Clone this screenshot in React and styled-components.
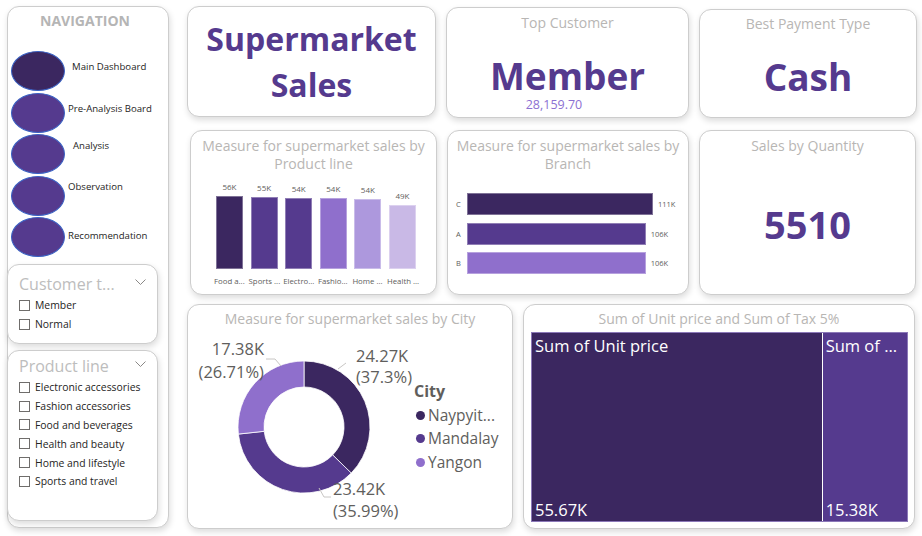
import React from 'react';
import styled, { createGlobalStyle } from 'styled-components';

const Global = createGlobalStyle`
  html, body { margin: 0; padding: 0; background: #fff; }
  body { font-family: "Open Sans", "Noto Sans", sans-serif; }
  * { box-sizing: border-box; }
`;

const C = {
  dark: '#3b2760',
  mid: '#553a8e',
  violet: '#8f6fcc',
  lilac: '#ad98dd',
  pale: '#c9b9e6',
  gray: '#b8b6b4',
  text: '#605e5c',
};

const Page = styled.div`
  width: 922px;
  height: 536px;
  overflow: hidden;
  display: flex;
  gap: 18px;
  padding: 6px 0 0 7px;
`;

const Card = styled.div`
  background: #fff;
  border: 1px solid #cdcdcd;
  border-radius: 12px;
  box-shadow: 1px 3px 6px rgba(0, 0, 0, 0.14);
  width: ${(p) => p.$w}px;
  height: ${(p) => p.$h}px;
  margin-top: ${(p) => p.$mt || 0}px;
  flex-shrink: 0;
  overflow: hidden;
`;

/* ---------- Navigation ---------- */
const NavCard = styled(Card)`
  display: flex;
  flex-direction: column;
  overflow: visible;
`;

const NavTitle = styled.div`
  text-align: center;
  font-weight: 700;
  font-size: 14px;
  line-height: 18px;
  color: #b5b5b5;
  padding-top: 5px;
  padding-right: 6px;
`;

const NavList = styled.div`
  display: flex;
  flex-direction: column;
  gap: 1.5px;
  padding: 21px 0 0 3px;
`;

const NavItem = styled.div`
  display: flex;
  align-items: center;
`;

const Ellipse = styled.div`
  width: 54px;
  height: 40px;
  border-radius: 50%;
  background: ${(p) => (p.$active ? C.dark : C.mid)};
  border: 1px solid #3a62c4;
  flex-shrink: 0;
`;

const NavLabel = styled.span`
  font-size: 9.6px;
  color: #252423;
  margin-left: ${(p) => p.$dx}px;
  margin-bottom: ${(p) => p.$up * 2}px;
  white-space: nowrap;
`;

const Slicers = styled.div`
  display: flex;
  flex-direction: column;
  gap: 6px;
  margin: 7px 0 0 -1px;
`;

const SlicerCard = styled(Card)`
  display: flex;
  flex-direction: column;
  padding: ${(p) => p.$pt}px 11px 0 11px;
`;

const SlicerHead = styled.div`
  display: flex;
  align-items: center;
  justify-content: space-between;
  margin-bottom: 1px;
`;

const SlicerTitle = styled.span`
  font-size: 16px;
  line-height: 22px;
  color: #bdbdbd;
`;

const Chevron = styled.svg`
  width: 11px;
  height: 7px;
  margin-top: -3px;
`;

const CheckRow = styled.label`
  display: flex;
  align-items: center;
  gap: 5px;
  height: 18.8px;
  font-size: 10.4px;
  color: #252423;
  white-space: nowrap;
`;

const Box = styled.span`
  width: 11px;
  height: 11px;
  border: 1px solid #6f6d6b;
  flex-shrink: 0;
`;

/* ---------- Main ---------- */
const Main = styled.div`
  display: flex;
  flex-direction: column;
`;

const Row = styled.div`
  display: flex;
  align-items: flex-start;
  gap: ${(p) => p.$gap}px;
  margin-top: ${(p) => p.$mt || 0}px;
  padding-left: ${(p) => p.$pl || 0}px;
`;

const TitleCard = styled(Card)`
  display: flex;
  align-items: center;
  justify-content: center;
  text-align: center;
`;

const BigTitle = styled.h1`
  margin: 0;
  font-size: 32px;
  line-height: 46px;
  font-weight: 700;
  color: ${C.mid};
`;

const KpiCard = styled(Card)`
  display: flex;
  flex-direction: column;
  align-items: center;
  padding-top: ${(p) => p.$pt}px;
`;

const KpiLabel = styled.div`
  font-size: 14px;
  line-height: 20px;
  color: ${C.gray};
`;

const KpiValue = styled.div`
  font-size: ${(p) => p.$size || 37}px;
  line-height: 34px;
  font-weight: 700;
  color: ${C.mid};
  margin-top: ${(p) => p.$mt}px;
`;

const KpiSub = styled.div`
  font-size: 12.5px;
  line-height: 15px;
  color: #8c70d2;
  margin-top: 4px;
  padding-right: 27px;
`;

const ChartCard = styled(Card)`
  display: flex;
  flex-direction: column;
  padding-top: ${(p) => p.$pt ?? 6}px;
`;

const ChartTitle = styled.div`
  text-align: center;
  font-size: 14px;
  line-height: ${(p) => p.$lh || 18}px;
  color: ${C.gray};
  padding: 0 4px;
`;

/* column chart */
const ColumnArea = styled.div`
  display: flex;
  align-items: flex-end;
  gap: 7.6px;
  height: 96px;
  padding-left: 25px;
`;

const Col = styled.div`
  width: 27px;
  display: flex;
  flex-direction: column;
  align-items: center;
`;

const ValLabel = styled.span`
  font-size: 8px;
  line-height: 10px;
  color: ${C.text};
  margin-bottom: 4px;
`;

const ColBar = styled.div`
  width: 27px;
  background: ${(p) => p.$c};
  border: 1px solid rgba(255, 255, 255, 0.35);
`;

const CatRow = styled.div`
  display: flex;
  gap: 4.6px;
  padding-left: 23px;
  margin-top: 7px;
`;

const CatLabel = styled.span`
  width: 30px;
  font-size: 7.8px;
  line-height: 10px;
  color: ${C.text};
  white-space: nowrap;
  text-align: center;
`;

/* bar chart */
const BarList = styled.div`
  display: flex;
  flex-direction: column;
  gap: 7.5px;
  margin-top: 20px;
  padding-left: 8px;
`;

const BarRow = styled.div`
  display: flex;
  align-items: center;
  height: 22px;
`;

const BarKey = styled.span`
  width: 11px;
  font-size: 7.5px;
  color: ${C.text};
`;

const HBar = styled.div`
  height: 22px;
  background: ${(p) => p.$c};
  border: 1px solid rgba(255, 255, 255, 0.35);
`;

const BarVal = styled.span`
  font-size: 7.5px;
  color: ${C.text};
  margin-left: 5px;
`;

const QtyBody = styled.div`
  flex: 1;
  display: flex;
  align-items: center;
  justify-content: center;
  padding-bottom: 3px;
`;

/* donut */
const DonutBody = styled.div`
  display: flex;
  align-items: flex-start;
  gap: 2px;
`;

const Legend = styled.div`
  display: flex;
  flex-direction: column;
  padding-top: 51px;
`;

const LegendTitle = styled.div`
  font-size: 16px;
  line-height: 23.5px;
  font-weight: 700;
  color: ${C.text};
`;

const LegendItem = styled.div`
  display: flex;
  align-items: center;
  gap: 3px;
  font-size: 15.5px;
  line-height: 23.5px;
  color: ${C.text};
  white-space: nowrap;
  margin-left: 2px;
`;

const Dot = styled.span`
  width: 9px;
  height: 9px;
  border-radius: 50%;
  background: ${(p) => p.$c};
`;

/* treemap */
const TreeArea = styled.div`
  margin: 3px 6px 6px 7px;
  flex: 1;
  display: flex;
  gap: 1px;
  background: #fff;
  border: 1px solid #8b78b8;
`;

const Tile = styled.div`
  flex: ${(p) => p.$v} 1 0;
  min-width: 0;
  background: ${(p) => p.$c};
  display: flex;
  flex-direction: column;
  justify-content: space-between;
  padding: 2px 3px 0 3px;
  color: #fff;
  font-size: 16.5px;
  line-height: 22px;
  white-space: nowrap;
  overflow: hidden;
`;

const products = [
  { k: 'Food a...', v: 56.14, c: C.dark, l: '56K' },
  { k: 'Sports ...', v: 55.12, c: C.mid, l: '55K' },
  { k: 'Electro...', v: 54.34, c: C.mid, l: '54K' },
  { k: 'Fashio...', v: 54.31, c: C.violet, l: '54K' },
  { k: 'Home ...', v: 53.86, c: C.lilac, l: '54K' },
  { k: 'Health ...', v: 49.19, c: C.pale, l: '49K' },
];

const branches = [
  { k: 'C', v: 110.57, c: C.dark, l: '111K' },
  { k: 'A', v: 106.2, c: C.mid, l: '106K' },
  { k: 'B', v: 106.2, c: C.violet, l: '106K' },
];

const navItems = [
  { t: 'Main Dashboard', dx: 7, up: 5, active: true },
  { t: 'Pre-Analysis Board', dx: 3, up: 4.5 },
  { t: 'Analysis', dx: 8, up: 9 },
  { t: 'Observation', dx: 3, up: 9.5 },
  { t: 'Recommendation', dx: 3, up: 2 },
];

function arcPath(cx, cy, R, r, a0, a1) {
  const rad = (a) => (a * Math.PI) / 180;
  const p = (a, d) => [cx + d * Math.sin(rad(a)), cy - d * Math.cos(rad(a))];
  const large = a1 - a0 > 180 ? 1 : 0;
  const [x0, y0] = p(a0, R);
  const [x1, y1] = p(a1, R);
  const [x2, y2] = p(a1, r);
  const [x3, y3] = p(a0, r);
  return `M${x0} ${y0} A${R} ${R} 0 ${large} 1 ${x1} ${y1} L${x2} ${y2} A${r} ${r} 0 ${large} 0 ${x3} ${y3} Z`;
}

function Donut() {
  const cx = 116, cy = 98, R = 66, r = 40;
  const segs = [
    { a0: 0, a1: 134.28, c: C.dark },
    { a0: 134.28, a1: 263.84, c: C.mid },
    { a0: 263.84, a1: 360, c: C.violet },
  ];
  const t = { fontSize: 16.5, fill: C.text, fontFamily: '"Open Sans", sans-serif' };
  return (
    <svg width="224" height="196" viewBox="0 0 224 196">
      {segs.map((s, i) => (
        <path key={i} d={arcPath(cx, cy, R, r, s.a0, s.a1)} fill={s.c} stroke="#fff" strokeWidth="0.8" />
      ))}
      <g stroke="#c8c6c4" strokeWidth="1" fill="none">
        <polyline points="150,40 158,34" />
        <polyline points="78,30 87,30 93,37" />
        <polyline points="131,159 136,168 143,168" />
      </g>
      <text x="168" y="33" {...t}>24.27K</text>
      <text x="168" y="54" {...t}>(37.3%)</text>
      <text x="76" y="26" textAnchor="end" {...t}>17.38K</text>
      <text x="76" y="49" textAnchor="end" {...t}>(26.71%)</text>
      <text x="145" y="166" {...t}>23.42K</text>
      <text x="145" y="188" {...t}>(35.99%)</text>
    </svg>
  );
}

function Slicer({ title, items, h, pt }) {
  return (
    <SlicerCard $w={151} $h={h} $pt={pt}>
      <SlicerHead>
        <SlicerTitle>{title}</SlicerTitle>
        <Chevron viewBox="0 0 11 7">
          <polyline points="0.5,0.5 5.5,5.5 10.5,0.5" fill="none" stroke="#8a8886" strokeWidth="1" />
        </Chevron>
      </SlicerHead>
      {items.map((it) => (
        <CheckRow key={it}>
          <Box />
          {it}
        </CheckRow>
      ))}
    </SlicerCard>
  );
}

export default function App() {
  const maxP = 56.14;
  return (
    <>
      <Global />
      <Page>
        <NavCard $w={162} $h={522}>
          <NavTitle>NAVIGATION</NavTitle>
          <NavList>
            {navItems.map((n) => (
              <NavItem key={n.t}>
                <Ellipse $active={n.active} />
                <NavLabel $dx={n.dx} $up={n.up}>{n.t}</NavLabel>
              </NavItem>
            ))}
          </NavList>
          <Slicers>
            <Slicer title="Customer t..." items={['Member', 'Normal']} h={80} pt={8} />
            <Slicer
              title="Product line"
              items={[
                'Electronic accessories',
                'Fashion accessories',
                'Food and beverages',
                'Health and beauty',
                'Home and lifestyle',
                'Sports and travel',
              ]}
              h={171}
              pt={4}
            />
          </Slicers>
        </NavCard>

        <Main>
          <Row $gap={10}>
            <TitleCard $w={249} $h={111}>
              <BigTitle>
                Supermarket
                <br />
                Sales
              </BigTitle>
            </TitleCard>
            <KpiCard $w={243} $h={111} $mt={1} $pt={5}>
              <KpiLabel>Top Customer</KpiLabel>
              <KpiValue $mt={26}>Member</KpiValue>
              <KpiSub>28,159.70</KpiSub>
            </KpiCard>
            <KpiCard $w={218} $h={109} $mt={3} $pt={4}>
              <KpiLabel>Best Payment Type</KpiLabel>
              <KpiValue $mt={26}>Cash</KpiValue>
            </KpiCard>
          </Row>

          <Row $gap={10} $mt={12} $pl={3}>
            <ChartCard $w={247} $h={165}>
              <ChartTitle>
                Measure for supermarket sales by
                <br />
                Product line
              </ChartTitle>
              <ColumnArea>
                {products.map((p) => (
                  <Col key={p.k}>
                    <ValLabel>{p.l}</ValLabel>
                    <ColBar $c={p.c} style={{ height: `${(p.v / maxP) * 73}px` }} />
                  </Col>
                ))}
              </ColumnArea>
              <CatRow>
                {products.map((p) => (
                  <CatLabel key={p.k}>{p.k}</CatLabel>
                ))}
              </CatRow>
            </ChartCard>
            <ChartCard $w={242} $h={165}>
              <ChartTitle>
                Measure for supermarket sales by
                <br />
                Branch
              </ChartTitle>
              <BarList>
                {branches.map((b) => (
                  <BarRow key={b.k}>
                    <BarKey>{b.k}</BarKey>
                    <HBar $c={b.c} style={{ width: `${(b.v / 110.57) * 186}px` }} />
                    <BarVal>{b.l}</BarVal>
                  </BarRow>
                ))}
              </BarList>
            </ChartCard>
            <ChartCard $w={217} $h={165} $pt={5}>
              <ChartTitle $lh={20}>Sales by Quantity</ChartTitle>
              <QtyBody>
                <KpiValue $mt={0} $size={38}>5510</KpiValue>
              </QtyBody>
            </ChartCard>
          </Row>

          <Row $gap={10} $mt={9}>
            <ChartCard $w={326} $h={225} $pt={4}>
              <ChartTitle $lh={20}>Measure for supermarket sales by City</ChartTitle>
              <DonutBody>
                <Donut />
                <Legend>
                  <LegendTitle>City</LegendTitle>
                  <LegendItem><Dot $c={C.dark} />Naypyit...</LegendItem>
                  <LegendItem><Dot $c={C.mid} />Mandalay</LegendItem>
                  <LegendItem><Dot $c={C.violet} />Yangon</LegendItem>
                </Legend>
              </DonutBody>
            </ChartCard>
            <ChartCard $w={392} $h={225} $pt={4}>
              <ChartTitle $lh={20}>Sum of Unit price and Sum of Tax 5%</ChartTitle>
              <TreeArea>
                <Tile $v={55.67} $c={C.dark}>
                  <span>Sum of Unit price</span>
                  <span>55.67K</span>
                </Tile>
                <Tile $v={15.38} $c={C.mid}>
                  <span>Sum of ...</span>
                  <span>15.38K</span>
                </Tile>
              </TreeArea>
            </ChartCard>
          </Row>
        </Main>
      </Page>
    </>
  );
}
